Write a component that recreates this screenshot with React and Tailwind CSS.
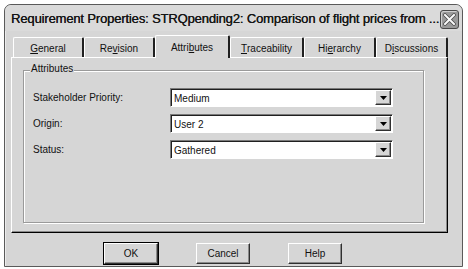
import { useState } from 'react';

const TABS = [
  { pre: '', key: 'G', post: 'eneral', w: 'w-[71px]' },
  { pre: 'Re', key: 'v', post: 'ision', w: 'w-[71px]' },
  { pre: 'Attri', key: 'b', post: 'utes', w: 'w-[75px]', active: true },
  { pre: '', key: 'T', post: 'raceability', w: 'w-[74px]' },
  { pre: 'Hi', key: 'e', post: 'rarchy', w: 'w-[72px]' },
  { pre: 'D', key: 'i', post: 'scussions', w: 'w-[72px]' },
];

const FIELDS = [
  { label: 'Stakeholder Priority:', value: 'Medium' },
  { label: 'Origin:', value: 'User 2' },
  { label: 'Status:', value: 'Gathered' },
];

function Tab({ tab }) {
  if (tab.active) {
    return (
      <div
        className={`${tab.w} relative z-10 h-[23px] -mb-px flex items-start justify-center pt-[4px] bg-[#d6d6d6] border-l border-t border-white border-r-2 border-r-[#202020] rounded-t-[2px]`}
      >
        {tab.pre}
        <span className="underline underline-offset-1">{tab.key}</span>
        {tab.post}
      </div>
    );
  }
  return (
    <div
      className={`${tab.w} h-[20px] flex items-start justify-center pt-[3px] bg-[#d6d6d6] border-l border-t border-white border-r-2 border-r-[#202020] rounded-t-[2px]`}
    >
      {tab.pre}
      <span className="underline underline-offset-1">{tab.key}</span>
      {tab.post}
    </div>
  );
}

function Combo({ value }) {
  return (
    <div className="w-[223px] h-[19px] flex items-center bg-white border-t border-l border-[#7a7a7a] border-b border-r border-b-white border-r-white shadow-[inset_1px_1px_0_#202020]">
      <span className="flex-1 pl-[3px] pt-px">{value}</span>
      <div className="w-[16px] h-[15px] mr-[1px] flex items-center justify-center bg-[#d6d6d6] border-t border-l border-white border-b border-r border-b-[#303030] border-r-[#303030] shadow-[inset_-1px_-1px_0_#8a8a8a]">
        <svg width="7" height="4" viewBox="0 0 7 4">
          <path d="M0 0h7L3.5 4z" fill="#000" />
        </svg>
      </div>
    </div>
  );
}

function Button({ children, def }) {
  return (
    <div
      className={`w-[54px] h-[21px] flex items-center justify-center bg-[#d6d6d6] border-t border-l border-white border-b border-r border-b-[#303030] border-r-[#303030] shadow-[inset_-1px_-1px_0_#8a8a8a] ${def ? 'outline outline-1 outline-black' : ''}`}
    >
      {children}
    </div>
  );
}

export default function App() {
  const [tab] = useState('Attributes');

  return (
    <div className="w-[468px] h-[269px] bg-white pt-[4px] pl-[4px] overflow-hidden font-['Liberation_Sans',Arial,sans-serif] text-[10px] text-[#111]">
      <div className="w-[459px] h-[263px] flex flex-col bg-[#d6d6d6] border border-[#5a5a5a] rounded-t-[7px] shadow-[inset_1px_1px_0_#ececec]">
        {/* Title bar */}
        <div className="h-[26px] shrink-0 flex items-center pl-[6px] pr-[3px] bg-[#dadada] rounded-t-[7px]">
          <span className="flex-1 min-w-0 text-[13px] leading-none tracking-[-0.15px] text-[#151515] whitespace-nowrap [text-shadow:0.3px_0_0_#151515]">
            Requirement Properties: STRQpending2: Comparison of flight prices from ...
          </span>
          <div className="w-[19px] h-[19px] shrink-0 mt-[2px] flex items-center justify-center rounded-[3px] border border-[#4a4a4a] bg-[#9a9a9a] shadow-[inset_1px_1px_0_#cfcfcf]">
            <svg width="13" height="13" viewBox="0 0 13 13">
              <path d="M2 2L11 11M11 2L2 11" stroke="#4a4a4a" strokeWidth="3.6" strokeLinecap="square" />
              <path d="M2 2L11 11M11 2L2 11" stroke="#fafafa" strokeWidth="2" strokeLinecap="square" />
            </svg>
          </div>
        </div>

        {/* Tabs */}
        <div className="mt-[4px] ml-[7px] h-[22px] flex items-end">
          <div className="w-px" />
          {TABS.map((t) => (
            <Tab key={t.key + t.post} tab={t} />
          ))}
        </div>

        {/* Panel */}
        <div className="ml-[6px] w-[437px] h-[176px] shrink-0 border-l border-t border-white border-r border-b border-r-black border-b-black shadow-[inset_-1px_-1px_0_#8a8a8a] pt-[7px] pl-[11px]">
          <div className="relative w-[401px] h-[153px] mt-[5px] border border-[#9a9a9a] shadow-[1px_1px_0_#fff,inset_1px_1px_0_#fff]">
            <span className="absolute -top-[7px] left-[6px] px-[1px] bg-[#d6d6d6] leading-none">{tab}</span>
            <div className="pt-[17px] pl-[9px] flex flex-col gap-[7px]">
              {FIELDS.map((f) => (
                <div key={f.label} className="flex items-center">
                  <span className="w-[137px]">{f.label}</span>
                  <Combo value={f.value} />
                </div>
              ))}
            </div>
          </div>
        </div>

        {/* Buttons */}
        <div className="mt-[10px] pl-[99px] flex gap-[38px]">
          <Button def>OK</Button>
          <Button>Cancel</Button>
          <Button>Help</Button>
        </div>
      </div>
    </div>
  );
}
